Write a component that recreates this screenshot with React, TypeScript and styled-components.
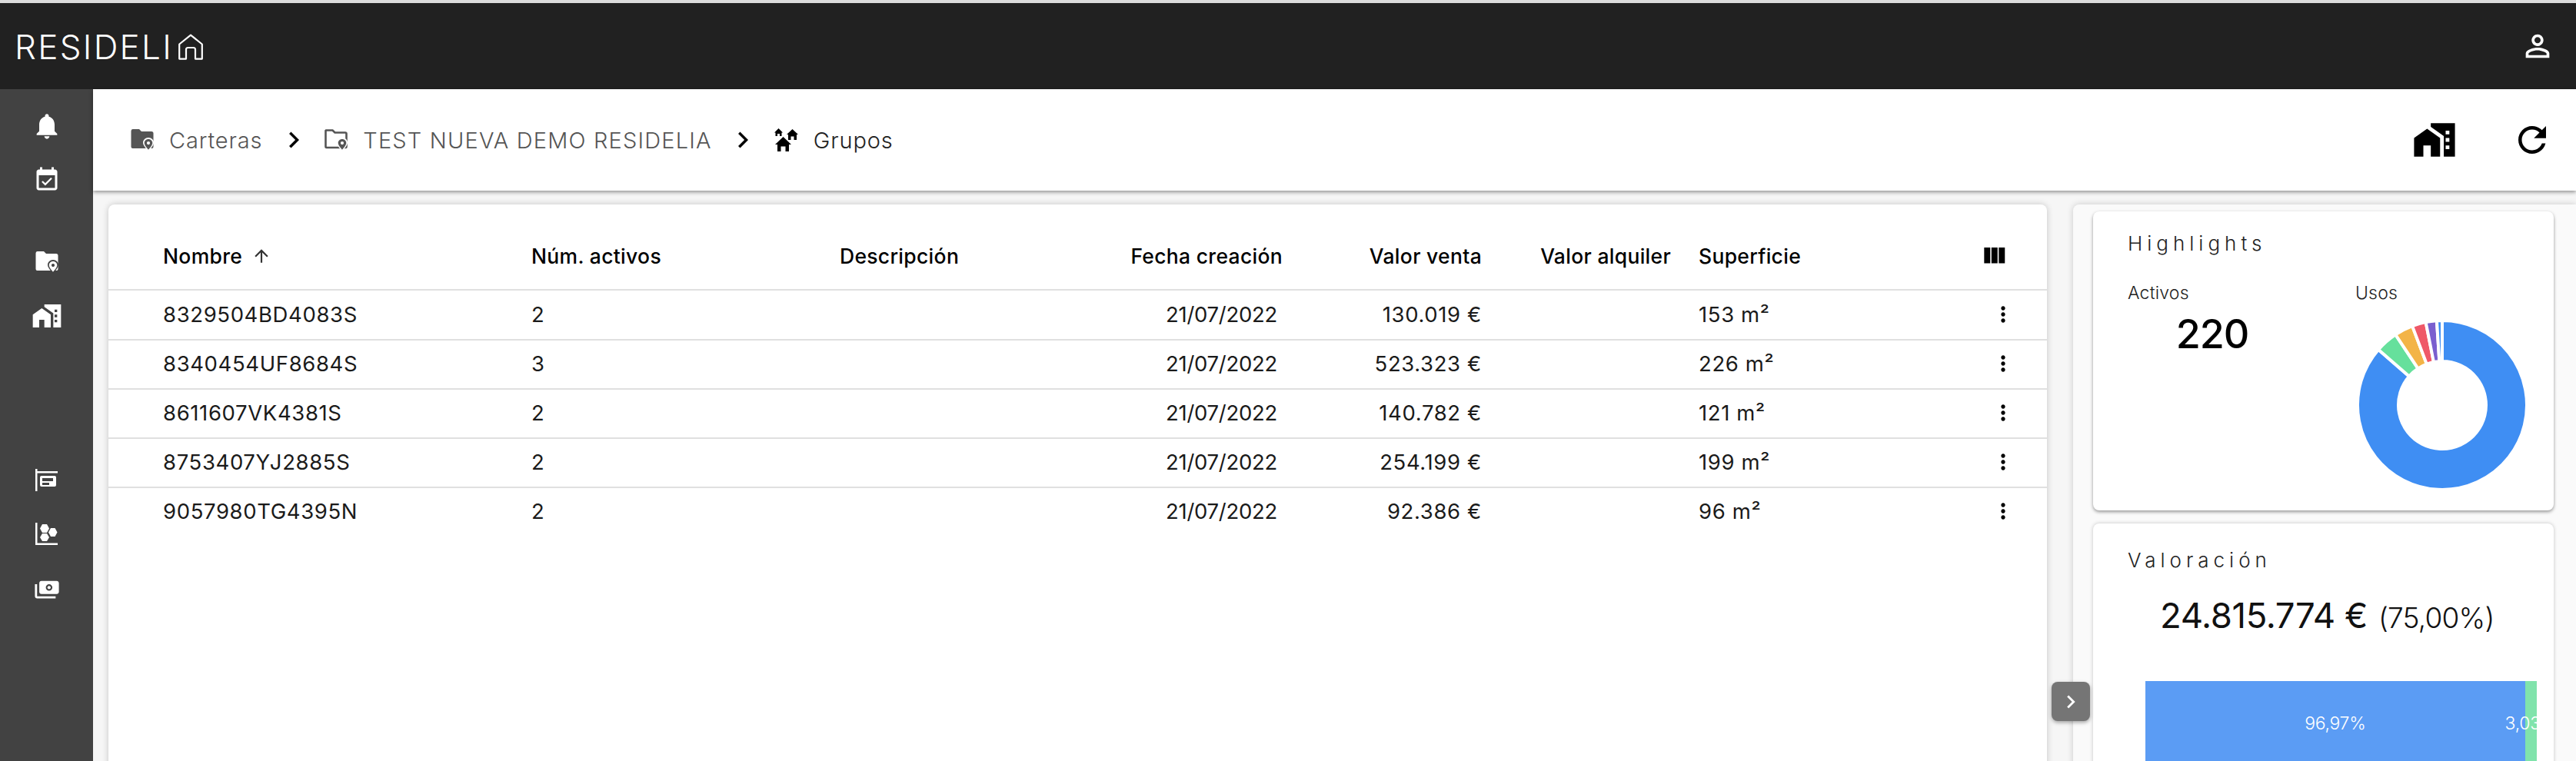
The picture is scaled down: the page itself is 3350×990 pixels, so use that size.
import React from "react";
import styled, { createGlobalStyle } from "styled-components";

const Global = createGlobalStyle`
  html, body { margin: 0; padding: 0; background: #f6f6f6; }
  body { font-family: Inter, "Noto Sans", "Liberation Sans", sans-serif; color: #111; overflow: hidden; }
  #root { height: 990px; overflow: hidden; }
`;

const Page = styled.div`
  height: 990px; display: grid; grid-template-rows: 4px 112px 1fr; overflow: hidden;
`;
const TopStrip = styled.div` background: #dcdcdc; `;
const AppBar = styled.header`
  background: #212121; display: flex; align-items: center; justify-content: space-between;
  padding: 0 27px 0 19px; color: #fff;
`;
const Logo = styled.div`
  display: flex; align-items: center; gap: 7px; padding-top: 2px;
  font-size: 44px; font-weight: 300; letter-spacing: 2.3px; line-height: 1;
`;
const Body = styled.div`
  display: grid; grid-template-columns: 121px 1fr; min-height: 0;
`;
const Sidebar = styled.nav`
  background: #424242; display: flex; flex-direction: column; padding-top: 13px; color: #fff;
`;
const SideGroup = styled.div<{ $gap?: number }>`
  display: flex; flex-direction: column; margin-top: ${(p) => p.$gap ?? 0}px;
`;
const SideItem = styled.div`
  height: 70px; display: flex; align-items: center; justify-content: center;
`;
const Main = styled.main`
  display: grid; grid-template-rows: 132px 1fr; min-width: 0; min-height: 0;
`;
const Toolbar = styled.div`
  background: #fff; display: flex; align-items: center; justify-content: space-between;
  padding: 0 30px 0 49px; box-shadow: 0 2px 5px rgba(0,0,0,.42); position: relative; z-index: 2;
`;
const Crumbs = styled.div` display: flex; align-items: center; `;
const Crumb = styled.div<{ $dark?: boolean; $wide?: boolean }>`
  display: flex; align-items: center; gap: 20px; font-size: 29px; font-weight: 300;
  letter-spacing: ${(p) => (p.$wide ? "1.18px" : ".85px")}; color: ${(p) => (p.$dark ? "#222" : "#555")};
`;
const CrumbSep = styled.div`
  display: flex; align-items: center; color: #000; margin: 0 19.500px 0 19.500px;
`;
const ToolActions = styled.div` display: flex; align-items: center; gap: 71px; `;
const Content = styled.div`
  display: grid; grid-template-columns: 2521px 1fr; gap: 34px; padding: 18px 0 0 20px;
  min-height: 0; position: relative;
`;
const TableCard = styled.section`
  background: #fff; border-radius: 8px 8px 0 0; box-shadow: 0 0 8px rgba(0,0,0,.2); height: 800px;
`;
const cols = "71px 479px 401px 308px 268px 259px 246px 36px 351px 102px";
const Row = styled.div`
  display: grid; grid-template-columns: ${cols}; align-items: center;
  height: 62px; padding-bottom: 1px;
  border-bottom: 2px solid #e0e0e0; margin-bottom: -1px;
  font-size: 27.5px; font-weight: 400; letter-spacing: .62px; color: #1a1a1a;
`;
const HeadRow = styled(Row)`
  height: 86px; padding: 24px 0 0; margin-bottom: 0;
  font-size: 26.5px; font-weight: 500; letter-spacing: .3px; color: #000;
`;
const PlainRow = styled(Row)` border-bottom-color: transparent; `;
const Cell = styled.div<{ $right?: boolean; $inset?: number; $col?: number; $tight?: boolean }>`
  grid-column: ${(p) => p.$col};
  padding-right: ${(p) => p.$inset ?? 0}px; white-space: nowrap; display: flex;
  justify-content: ${(p) => (p.$right ? "flex-end" : "flex-start")}; align-items: center; gap: 12px;
  ${(p) => (p.$tight ? "letter-spacing: -.28px;" : "")}
`;
const ActionCell = styled.div<{ $inset: number }>`
  grid-column: 10; display: flex; padding-left: ${(p) => p.$inset}px;
`;
const Panel = styled.aside`
  background: #fafafa; box-shadow: 0 0 8px rgba(0,0,0,.18); border-radius: 8px 0 0 0;
  padding: 9px 29px 0 26px; display: flex; flex-direction: column; gap: 17px; height: 800px;
`;
const Card = styled.section`
  background: #fff; border-radius: 8px; box-shadow: 0 2px 4px rgba(0,0,0,.4); 
  padding: 0 0 0 45px; box-sizing: border-box;
`;
const HighCard = styled(Card)` height: 396px; padding-top: 26px; `;
const ValueCard = styled(Card)`
  height: 400px; padding-top: 32px; box-shadow: 0 0 5px rgba(0,0,0,.22); overflow: hidden;
`;
const CardTitle = styled.h2`
  margin: 0; font-size: 26px; font-weight: 300; letter-spacing: 6px; line-height: 32px; color: #222;
`;
const HighGrid = styled.div` display: grid; grid-template-columns: 296px 1fr; margin-top: 33px; `;
const Label = styled.div` font-size: 23px; font-weight: 300; line-height: 30px; color: #222; letter-spacing: .2px; `;
const BigNumber = styled.div`
  width: 220px; text-align: center; font-size: 52px; font-weight: 500; line-height: 60px; margin-top: 9px;
  color: #000; letter-spacing: -1px;
`;
const DonutBox = styled.div` margin: 11px 0 0 -7px; width: 240px; height: 240px; `;
const ValueLine = styled.div`
  display: flex; align-items: baseline; margin: 28px 0 0 42px; font-size: 45.5px; font-weight: 400;
  color: #111; white-space: nowrap; letter-spacing: -.4px; gap: 14px;
`;
const ValueShare = styled.span` font-size: 37px; font-weight: 300; letter-spacing: -.8px; `;
const StackBar = styled.div`
  margin: 58px 0 0 23px; width: 509px; height: 110px; display: flex; overflow: hidden;
`;
const Segment = styled.div<{ $bg: string }>`
  background: ${(p) => p.$bg}; display: flex; align-items: center; justify-content: center;
  color: #fff; font-size: 23px; font-weight: 300; white-space: nowrap; letter-spacing: -.3px;
`;
const Handle = styled.button`
  position: absolute; left: 2547px; top: 639px; width: 50px; height: 51px; border: 0; border-radius: 8px;
  background: #757575; color: #fff; box-shadow: 0 2px 5px rgba(0,0,0,.35); padding: 0;
  display: flex; align-items: center; justify-content: center; z-index: 3;
`;

const Icon = ({ d, size, color = "currentColor" }: { d: string; size: number; color?: string }) => (
  <svg width={size} height={size} viewBox="0 0 24 24" fill={color} aria-hidden="true"><path d={d} /></svg>
);

const P = {
  bell: "M12 22c1.1 0 2-.9 2-2h-4c0 1.1.89 2 2 2zm6-6v-5c0-3.07-1.64-5.64-4.5-6.32V4c0-.83-.67-1.5-1.5-1.5s-1.5.67-1.5 1.5v.68C7.63 5.36 6 7.92 6 11v5l-2 2v1h16v-1l-2-2z",
  event: "M16.53 11.06 15.47 10l-4.88 4.88-2.12-2.12-1.06 1.06L10.59 17l5.94-5.94zM19 3h-1V1h-2v2H8V1H6v2H5c-1.11 0-1.99.9-1.99 2L3 19c0 1.1.89 2 2 2h14c1.1 0 2-.9 2-2V5c0-1.1-.9-2-2-2zm0 16H5V8h14v11z",
  homeWork: "M1 11v10h5v-6h4v6h5V11L8 6z M10 3v1.97l7 5V21h6V3H10zm10 14h-2v-2h2v2zm0-4h-2v-2h2v2zm0-4h-2V7h2v2z",
  refresh: "M17.65 6.35C16.2 4.9 14.21 4 12 4c-4.42 0-7.99 3.58-7.99 8s3.57 8 7.99 8c3.73 0 6.84-2.55 7.73-6h-2.08c-.82 2.33-3.04 4-5.65 4-3.31 0-6-2.69-6-6s2.69-6 6-6c1.66 0 3.14.69 4.22 1.78L13 11h7V4l-2.35 2.35z",
  person: "M12 5.9c1.16 0 2.1.94 2.1 2.1s-.94 2.1-2.1 2.1S9.9 9.16 9.9 8s.94-2.1 2.1-2.1m0 9c2.97 0 6.1 1.46 6.1 2.1v1.1H5.9V17c0-.64 3.13-2.1 6.1-2.1M12 4C9.79 4 8 5.79 8 8s1.79 4 4 4 4-1.79 4-4-1.79-4-4-4zm0 9c-2.67 0-8 1.34-8 4v3h16v-3c0-2.66-5.33-4-8-4z",
  more: "M12 8c1.1 0 2-.9 2-2s-.9-2-2-2-2 .9-2 2 .9 2 2 2zm0 2c-1.1 0-2 .9-2 2s.9 2 2 2 2-.9 2-2-.9-2-2-2zm0 6c-1.1 0-2 .9-2 2s.9 2 2 2 2-.9 2-2-.9-2-2-2z",
  columns: "M10 18h5V5h-5v13zm-6 0h5V5H4v13zM16 5v13h5V5h-5z",
  up: "M4 12l1.41 1.41L11 7.83V20h2V7.83l5.58 5.59L20 12l-8-8-8 8z",
  chevron: "M10 6L8.59 7.41 13.17 12l-4.58 4.59L10 18l6-6z",
};

const HouseLogo = () => (
  <svg width="32" height="34" viewBox="0 0 32 34" fill="none" stroke="#fff" strokeWidth="2.2" aria-hidden="true">
    <path d="M1.2 32.6V13.5L16 1.6l14.8 11.900v19.100H22V20.500a2.500 2.500 0 0 0-2.500-2.500h-7a2.500 2.500 0 0 0-2.500 2.500v12.100z" strokeLinejoin="round" />
  </svg>
);

const Pin = ({ cut }: { cut: string }) => (
  <>
    <path d="M23 11c-4 0-7 3-7 6.500 0 4.300 7 11 7 11s7-6.700 7-11c0-3.500-3-6.500-7-6.500z" fill={cut} />
    <path fillRule="evenodd" clipRule="evenodd" d="M23 13c-3 0-5.300 2.200-5.300 5 0 3.200 5.300 8.700 5.300 8.700s5.300-5.500 5.300-8.700c0-2.800-2.300-5-5.300-5zm0 3a2.100 2.100 0 1 1 0 4.200 2.100 2.100 0 0 1 0-4.200z" fill="currentColor" />
  </>
);

const FolderPin = ({ cut }: { cut: string }) => (
  <svg width="30" height="28" viewBox="0 0 30 28" fill="currentColor" aria-hidden="true">
    <path d="M2.500 0H11l3 3h13a2.500 2.500 0 0 1 2.500 2.500V23a2 2 0 0 1-2 2H2.500a2 2 0 0 1-2-2V2.500A2.500 2.500 0 0 1 2.500 0z" />
    <Pin cut={cut} />
  </svg>
);

const FolderPinOutline = () => (
  <svg width="30" height="28" viewBox="0 0 30 28" fill="none" aria-hidden="true">
    <path d="M2 1.500h8.500l3 3H27a1.500 1.500 0 0 1 1.500 1.500v17a1 1 0 0 1-1 1H2.500a1 1 0 0 1-1-1V2z" stroke="currentColor" strokeWidth="2.600" />
    <Pin cut="#fff" />
  </svg>
);

const GroupHomes = () => (
  <svg width="31" height="30" viewBox="0 0 31 30" fill="#000" aria-hidden="true">
    <path d="M5.500 0L11 5.500H9.500V10H7V7H4v3H1.500V5.500H0z" />
    <path d="M23.500 1L31 8h-2v7h-3.500v-4.500h-4V15H18V8h-2z" />
    <path d="M11.500 11L22 21h-3v9h-4.500v-6.500h-6V30H4v-9H1z" />
  </svg>
);

const SignIcon = () => (
  <svg width="30" height="30" viewBox="0 0 30 30" fill="#fff" aria-hidden="true">
    <path d="M0 0h2.500v29H0zM2.500 3H29v2.500H2.500z" />
    <path fillRule="evenodd" d="M8 9h17a2 2 0 0 1 2 2v10a2 2 0 0 1-2 2H8a2 2 0 0 1-2-2V11a2 2 0 0 1 2-2zm1 3v4h14v-4zm0 6v3h9v-3z" />
  </svg>
);

const HexIcon = () => (
  <svg width="30" height="30" viewBox="0 0 30 30" fill="#fff" aria-hidden="true">
    <path d="M0 0h2.500v26.500H29V29H0z" />
    <path d="M9 2h6l3 5.500-3 5.500H9L6 7.500zM20 7h5.500l3 5.500-3 5.500H20l-3-5.500zM9 14h6l3 5-3 5H9l-3-5z" />
  </svg>
);

const MoneyIcon = () => (
  <svg width="34" height="30" viewBox="0 0 24 21" fill="#fff" aria-hidden="true">
    <g transform="translate(24 0) scale(-1 1)">
      <path d="M19 14V6c0-1.100-.9-2-2-2H3c-1.100 0-2 .9-2 2v8c0 1.100.9 2 2 2h14c1.100 0 2-.9 2-2zm-9-1c-1.660 0-3-1.340-3-3s1.340-3 3-3 3 1.340 3 3-1.340 3-3 3zm13-6v11c0 1.100-.9 2-2 2H4v-2h17V7h2z" />
      <circle cx="10" cy="10" r="1.500" />
    </g>
  </svg>
);

const slice = (a0: number, a1: number, R: number, r: number) => {
  const rad = (a: number) => ((a - 90) * Math.PI) / 180;
  const pt = (rr: number, a: number) => `${120 + rr * Math.cos(rad(a))} ${120 + rr * Math.sin(rad(a))}`;
  const large = a1 - a0 > 180 ? 1 : 0;
  return `M${pt(R, a0)}A${R} ${R} 0 ${large} 1 ${pt(R, a1)}L${pt(r, a1)}A${r} ${r} 0 ${large} 0 ${pt(r, a0)}Z`;
};
const slices = [
  { a: 0, b: 311, c: "#3f8ef3" },
  { a: 311, b: 326.5, c: "#66e09c" },
  { a: 326.5, b: 339.3, c: "#f3b447" },
  { a: 339.3, b: 348.8, c: "#ef5868" },
  { a: 348.8, b: 356.3, c: "#7a5fcf" },
  { a: 356.3, b: 360, c: "#3f8ef3" },
];
const Donut = () => (
  <svg width="240" height="240" viewBox="0 0 240 240" aria-hidden="true">
    {slices.map((s) => (
      <path key={s.a} d={slice(s.a, s.b, 110, 57)} fill={s.c} stroke="#fff" strokeWidth="4" />
    ))}
  </svg>
);

const rows = [
  ["8329504BD4083S", "2", "130.019 €", "153 m²"],
  ["8340454UF8684S", "3", "523.323 €", "226 m²"],
  ["8611607VK4381S", "2", "140.782 €", "121 m²"],
  ["8753407YJ2885S", "2", "254.199 €", "199 m²"],
  ["9057980TG4395N", "2", "92.386 €", "96 m²"],
];

export default function App() {
  return (
    <Page>
      <Global />
      <TopStrip />
      <AppBar>
        <Logo>RESIDELI<HouseLogo /></Logo>
        <Icon d={P.person} size={46} />
      </AppBar>
      <Body>
        <Sidebar>
          <SideGroup>
            <SideItem><Icon d={P.bell} size={40} /></SideItem>
            <SideItem><Icon d={P.event} size={36} /></SideItem>
          </SideGroup>
          <SideGroup $gap={37}>
            <SideItem><FolderPin cut="#424242" /></SideItem>
            <SideItem><Icon d={P.homeWork} size={40} /></SideItem>
          </SideGroup>
          <SideGroup $gap={144}>
            <SideItem><SignIcon /></SideItem>
            <SideItem><HexIcon /></SideItem>
            <SideItem><MoneyIcon /></SideItem>
          </SideGroup>
        </Sidebar>
        <Main>
          <Toolbar>
            <Crumbs>
              <Crumb><FolderPin cut="#fff" />Carteras</Crumb>
              <CrumbSep><Icon d={P.chevron} size={42} /></CrumbSep>
              <Crumb $wide><FolderPinOutline />TEST NUEVA DEMO RESIDELIA</Crumb>
              <CrumbSep><Icon d={P.chevron} size={42} /></CrumbSep>
              <Crumb $dark><GroupHomes />Grupos</Crumb>
            </Crumbs>
            <ToolActions>
              <Icon d={P.homeWork} size={58} color="#000" />
              <Icon d={P.refresh} size={54} color="#000" />
            </ToolActions>
          </Toolbar>
          <Content>
            <TableCard>
              <HeadRow>
                <Cell $col={2}>Nombre <Icon d={P.up} size={26} color="#333" /></Cell>
                <Cell $col={3}>Núm. activos</Cell>
                <Cell $col={4}>Descripción</Cell>
                <Cell $col={5} $right>Fecha creación</Cell>
                <Cell $col={6} $right>Valor venta</Cell>
                <Cell $col={7} $right>Valor alquiler</Cell>
                <Cell $col={9}>Superficie</Cell>
                <ActionCell $inset={14}><Icon d={P.columns} size={38} color="#000" /></ActionCell>
              </HeadRow>
              {rows.map((r, i) => {
                const R = i === rows.length - 1 ? PlainRow : Row;
                return (
                  <R key={r[0]}>
                    <Cell $col={2}>{r[0]}</Cell>
                    <Cell $col={3}>{r[1]}</Cell>
                    <Cell $col={5} $right $inset={7} $tight>21/07/2022</Cell>
                    <Cell $col={6} $right>{r[2]}</Cell>
                    <Cell $col={9}>{r[3]}</Cell>
                    <ActionCell $inset={29}><Icon d={P.more} size={32} color="#000" /></ActionCell>
                  </R>
                );
              })}
            </TableCard>
            <Panel>
              <HighCard>
                <CardTitle>Highlights</CardTitle>
                <HighGrid>
                  <div>
                    <Label>Activos</Label>
                    <BigNumber>220</BigNumber>
                  </div>
                  <div>
                    <Label>Usos</Label>
                    <DonutBox><Donut /></DonutBox>
                  </div>
                </HighGrid>
              </HighCard>
              <ValueCard>
                <CardTitle>Valoración</CardTitle>
                <ValueLine>24.815.774 € <ValueShare>(75,00%)</ValueShare></ValueLine>
                <StackBar>
                  <Segment $bg="#5b9cf4" style={{ width: "96.97%" }}>96,97%</Segment>
                  <Segment $bg="#80e3ab" style={{ width: "3.03%" }}>3,03%</Segment>
                </StackBar>
              </ValueCard>
            </Panel>
            <Handle aria-label="Expandir"><Icon d={P.chevron} size={34} /></Handle>
          </Content>
        </Main>
      </Body>
    </Page>
  );
}
